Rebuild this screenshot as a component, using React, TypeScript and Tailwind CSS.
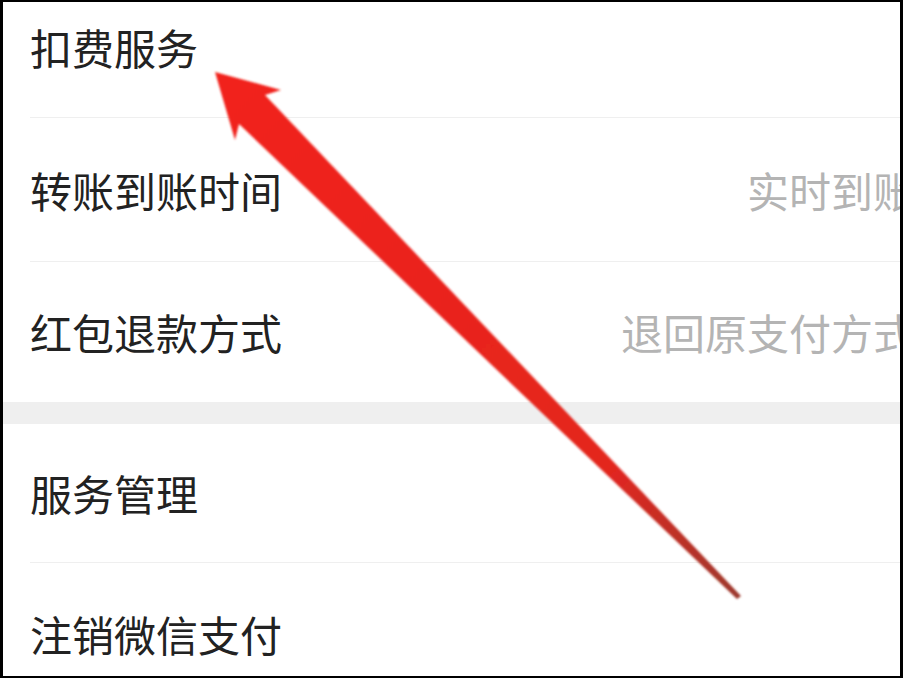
import React from "react";

type Row = {
  label: string;
  value?: string;
  h: string;
  line: boolean;
};

const topGroup: Row[] = [
  { label: "扣费服务", h: "h-[142px]", line: true },
  { label: "转账到账时间", value: "实时到账", h: "h-[144px]", line: true },
  { label: "红包退款方式", value: "退回原支付方式", h: "h-[140px]", line: false },
];

const bottomGroup: Row[] = [
  { label: "服务管理", h: "h-[139px]", line: true },
  { label: "注销微信支付", h: "h-[142px]", line: false },
];

const SettingRow = ({ row }: { row: Row }) => {
  return (
    <div className={`${row.h} pl-[27px]`}>
      <div
        className={`h-full flex items-center justify-between ${
          row.line ? "border-b border-[#efefef]" : ""
        }`}
      >
        <span className="text-[42px] leading-none text-[#222222]">{row.label}</span>
        {row.value && (
          <span className="text-[42px] leading-none text-[#b4b4b4] whitespace-nowrap">
            {row.value}
          </span>
        )}
      </div>
    </div>
  );
};

// red pointer drawn over the list
const Pointer = () => (
  <svg
    className="absolute left-0 top-0 pointer-events-none"
    width="903"
    height="678"
    viewBox="0 0 903 678"
  >
    <defs>
      <linearGradient id="shaft" x1="212" y1="70" x2="736" y2="596" gradientUnits="userSpaceOnUse">
        <stop offset="0" stopColor="#f2221c" />
        <stop offset="0.75" stopColor="#e3261f" />
        <stop offset="1" stopColor="#9c3a2e" />
      </linearGradient>
      <filter id="soft">
        <feGaussianBlur stdDeviation="0.8" />
      </filter>
    </defs>
    <polygon
      points="212,70 278,88 262,93 738,594 734,597 236,122 232,138"
      fill="url(#shaft)"
      filter="url(#soft)"
    />
  </svg>
);

const App = () => {
  return (
    <div
      className="relative w-[903px] h-[678px] overflow-hidden bg-white border-x-[3px] border-y-2 border-black"
      style={{ fontFamily: '"Noto Sans CJK SC", "Noto Sans", sans-serif' }}
    >
      <div className="w-[912px] -mt-[26px]">
        {topGroup.map((r, i) => (
          <SettingRow key={i} row={r} />
        ))}
        <div className="h-[22px] bg-[#efefef]" />
        {bottomGroup.map((r, i) => (
          <SettingRow key={i} row={r} />
        ))}
      </div>
      <Pointer />
    </div>
  );
};

export default App;
